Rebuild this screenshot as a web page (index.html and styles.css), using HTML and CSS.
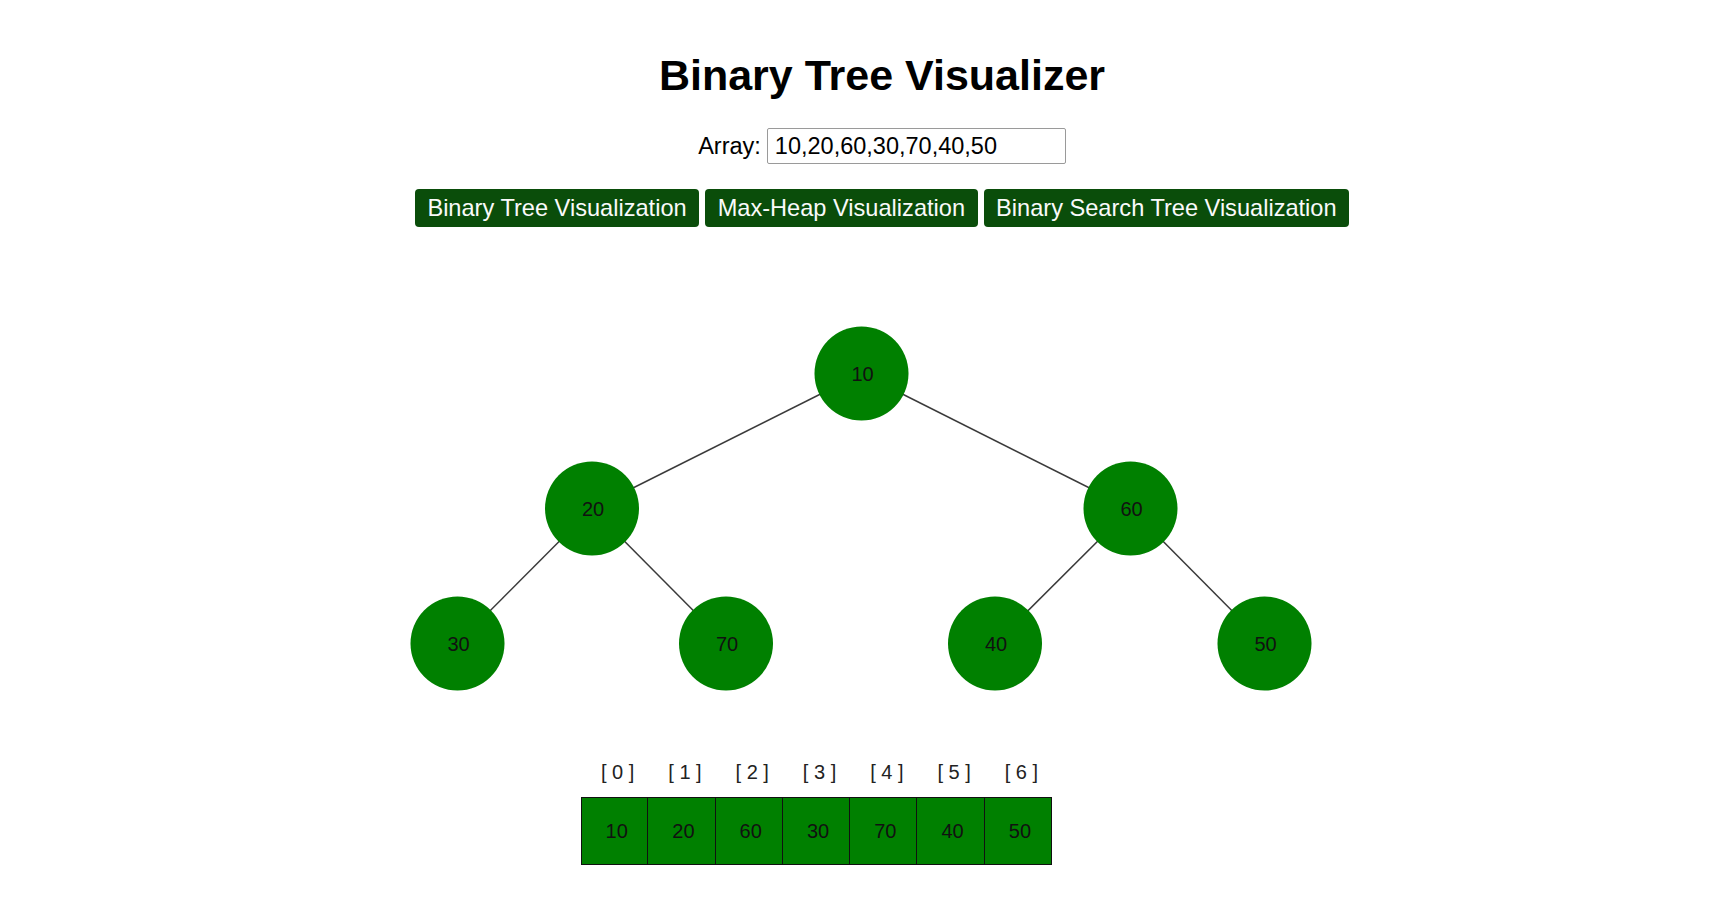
FILE: index.html
```html
<!DOCTYPE html>
<html lang="en">
<head>
<meta charset="utf-8">
<title>Binary Tree Visualizer</title>
<link rel="stylesheet" href="styles.css">
</head>
<body>
<header class="controls">
  <h1 class="title">Binary Tree Visualizer</h1>
  <div class="input-row">
    <label class="input-label" for="arr">Array:</label>
    <input id="arr" class="array-input" type="text" value="10,20,60,30,70,40,50">
  </div>
  <div class="button-row">
    <button class="viz-btn">Binary Tree Visualization</button>
    <button class="viz-btn">Max-Heap Visualization</button>
    <button class="viz-btn">Binary Search Tree Visualization</button>
  </div>
</header>

<svg class="tree" width="1722" height="480" viewBox="0 0 1722 480">
  <g class="edges">
    <line x1="861.5" y1="133.5" x2="592" y2="268.5"/>
    <line x1="861.5" y1="133.5" x2="1130.5" y2="268.5"/>
    <line x1="592" y1="268.5" x2="457.5" y2="403.5"/>
    <line x1="592" y1="268.5" x2="726" y2="403.5"/>
    <line x1="1130.5" y1="268.5" x2="995" y2="403.5"/>
    <line x1="1130.5" y1="268.5" x2="1264.5" y2="403.5"/>
  </g>
  <g class="nodes">
    <circle cx="861.5" cy="133.5" r="47"/><text x="862.5" y="133.5">10</text>
    <circle cx="592" cy="268.5" r="47"/><text x="593" y="268.5">20</text>
    <circle cx="1130.5" cy="268.5" r="47"/><text x="1131.5" y="268.5">60</text>
    <circle cx="457.5" cy="403.5" r="47"/><text x="458.5" y="403.5">30</text>
    <circle cx="726" cy="403.5" r="47"/><text x="727" y="403.5">70</text>
    <circle cx="995" cy="403.5" r="47"/><text x="996" y="403.5">40</text>
    <circle cx="1264.5" cy="403.5" r="47"/><text x="1265.5" y="403.5">50</text>
  </g>
</svg>

<section class="array-view">
  <div class="array-col"><span class="idx">[ 0 ]</span><span class="cell">10</span></div>
  <div class="array-col"><span class="idx">[ 1 ]</span><span class="cell">20</span></div>
  <div class="array-col"><span class="idx">[ 2 ]</span><span class="cell">60</span></div>
  <div class="array-col"><span class="idx">[ 3 ]</span><span class="cell">30</span></div>
  <div class="array-col"><span class="idx">[ 4 ]</span><span class="cell">70</span></div>
  <div class="array-col"><span class="idx">[ 5 ]</span><span class="cell">40</span></div>
  <div class="array-col"><span class="idx">[ 6 ]</span><span class="cell">50</span></div>
</section>
</body>
</html>
```
FILE: styles.css
```css
html, body {
  margin: 0;
  padding: 0;
  background: #ffffff;
}

body {
  font-family: "Liberation Sans", Arial, sans-serif;
  color: #000;
  width: 1722px;
}

.controls {
  padding-left: 42px;
  text-align: center;
}

.title {
  margin: 51px 0 0;
  font-size: 43px;
  font-weight: bold;
  line-height: 48px;
}

.input-row {
  margin-top: 29px;
  display: flex;
  justify-content: center;
  align-items: center;
  gap: 6px;
  height: 36px;
}

.input-label {
  font-size: 23.5px;
}

.array-input {
  box-sizing: border-box;
  width: 299px;
  height: 36px;
  margin: 0;
  padding: 0 7px;
  border: 1px solid #9a9a9a;
  border-radius: 2px;
  font-family: "Liberation Sans", Arial, sans-serif;
  font-size: 23.5px;
  color: #000;
}

.button-row {
  margin-top: 25px;
  display: flex;
  justify-content: center;
  gap: 6px;
}

.viz-btn {
  height: 38px;
  margin: 0;
  padding: 0 12.5px;
  border: none;
  border-radius: 4px;
  background: #0a4d0a;
  color: #fafafa;
  font-family: "Liberation Sans", Arial, sans-serif;
  font-size: 23.6px;
  line-height: 38px;
}

.tree {
  display: block;
  margin-top: 13px;
}

.edges line {
  stroke: #3a3a3a;
  stroke-width: 1.5;
}

.nodes circle {
  fill: #008000;
}

.nodes text {
  font-family: "Liberation Sans", Arial, sans-serif;
  font-size: 20px;
  fill: #111;
  text-anchor: middle;
  dominant-baseline: central;
}

.array-view {
  margin: 41px 0 0 581px;
  display: flex;
}

.array-col {
  display: flex;
  flex-direction: column;
  align-items: center;
  width: 67.3px;
}

.idx {
  font-size: 20px;
  line-height: 23px;
  color: #222;
  margin-left: 6px;
}

.cell {
  box-sizing: border-box;
  margin-top: 13px;
  width: 100%;
  height: 68px;
  padding-left: 4px;
  display: flex;
  align-items: center;
  justify-content: center;
  background: #008000;
  border: 1px solid #111;
  border-left: none;
  font-size: 20px;
  color: #111;
}

.array-col:first-child .cell {
  border-left: 1px solid #111;
}
```
